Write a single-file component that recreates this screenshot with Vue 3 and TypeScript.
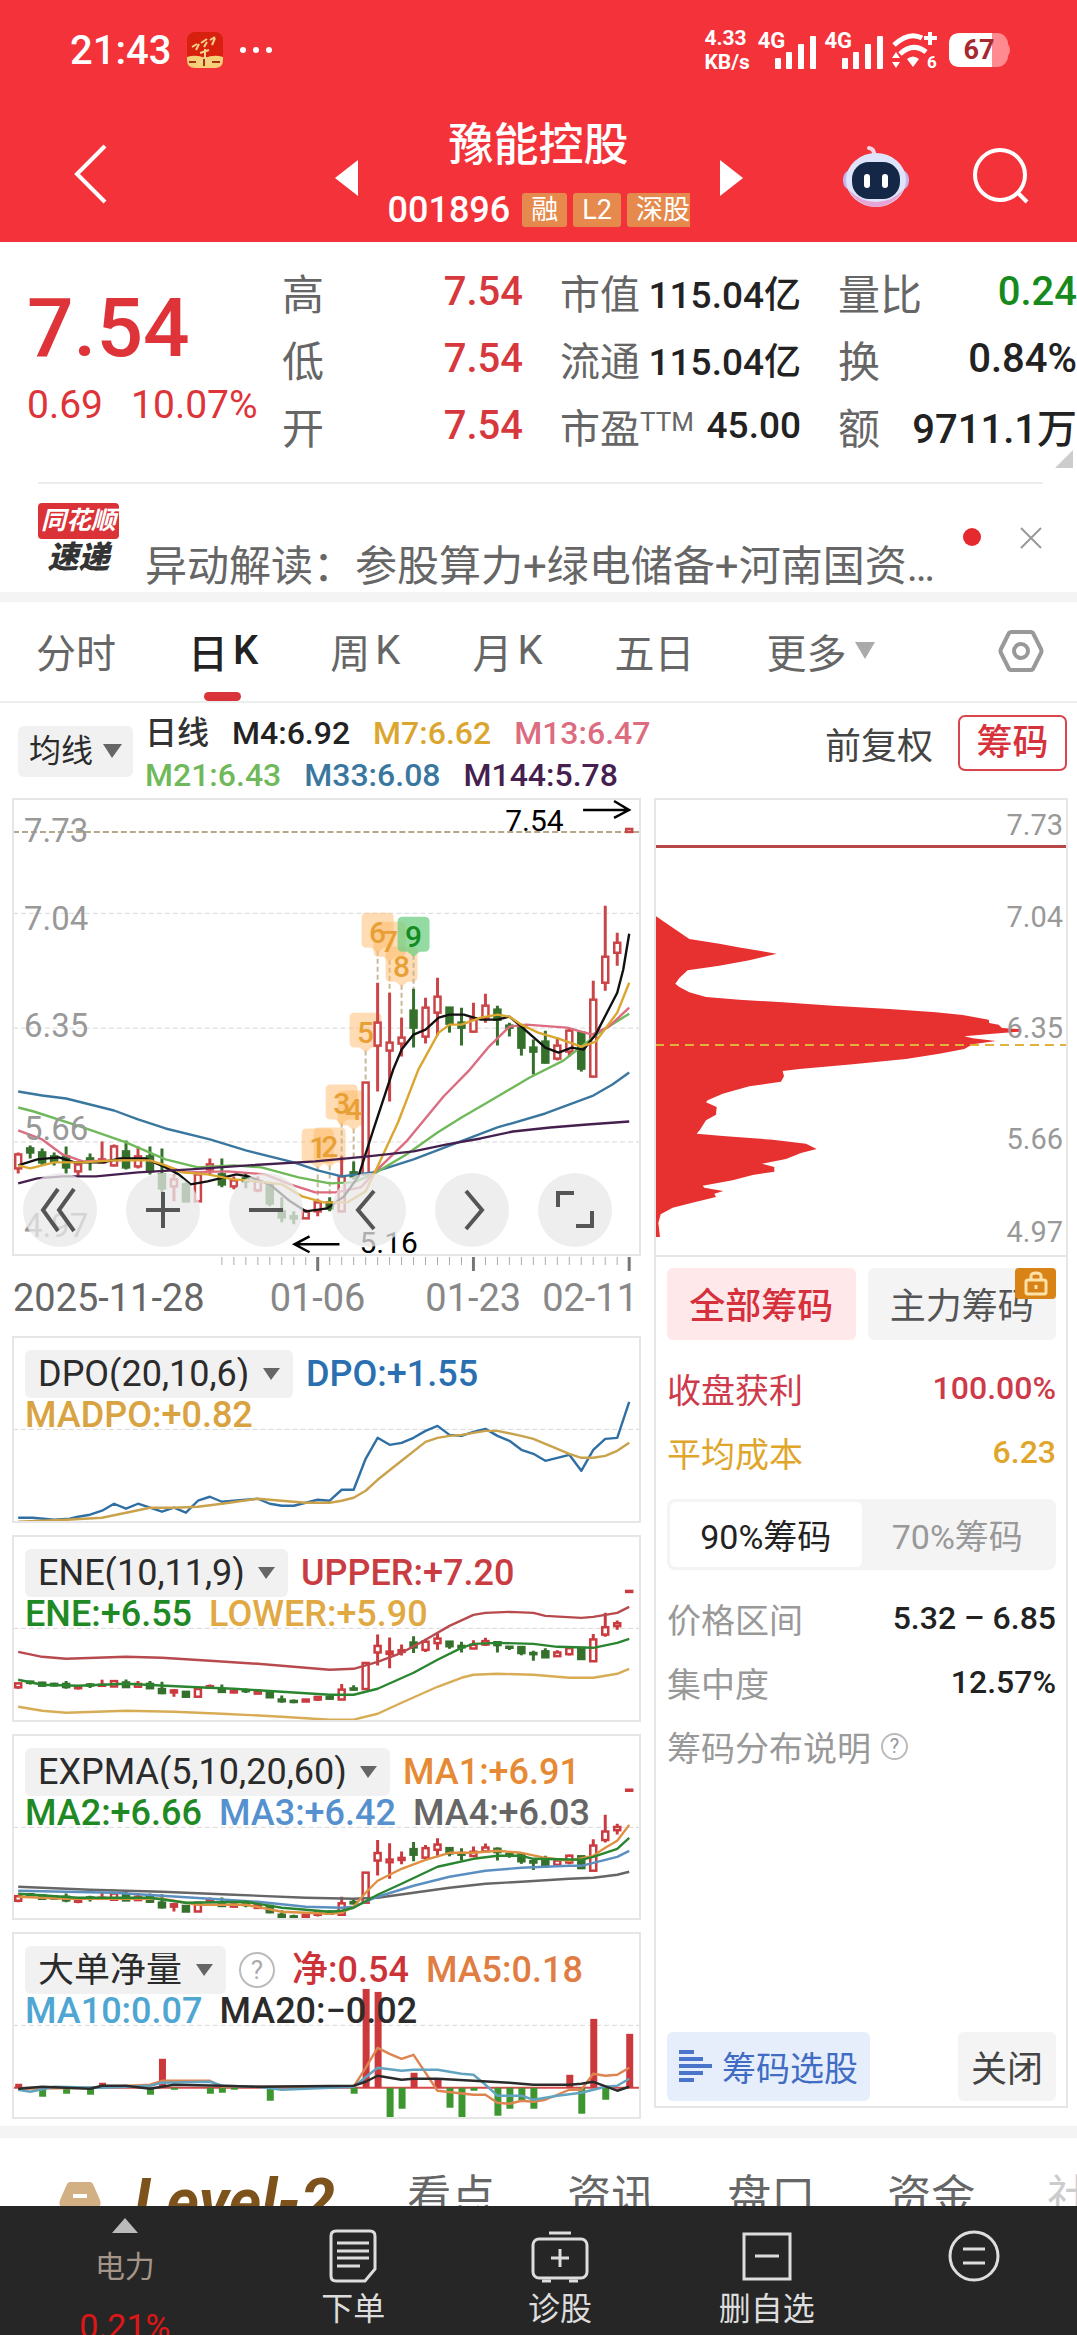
<script setup lang="ts">
type Point = [number, number]
type Candle = [number, number, number, number, 0 | 1]
interface Series { color: string; points: Point[] }
interface Reading { text: string; color: string }

const xAt = (i: number): number => Math.round(52 + i * 120) / 10
const line = (pts: Point[]): string => pts.map(([i, y]) => `${xAt(i)},${y}`).join(' ')

// high, body top, body bottom, low, rising
const candles: Candle[] = [
  [354, 356, 370, 375, 1], [347, 350, 354, 360, 0], [350, 354, 364, 367, 0], [354, 358, 363, 367, 0],
  [348, 358, 369, 375, 0], [364, 366, 373, 378, 1], [355, 360, 363, 372, 0], [343, 361, 364, 364, 1],
  [346, 348, 367, 368, 1], [342, 353, 369, 371, 0], [348, 358, 368, 370, 1], [348, 358, 373, 376, 0],
  [350, 376, 390, 394, 0], [376, 381, 388, 403, 1], [384, 386, 403, 403, 0], [374, 376, 403, 403, 1],
  [360, 366, 371, 376, 1], [360, 376, 386, 389, 0], [378, 382, 388, 391, 1], [374, 380, 383, 390, 0],
  [378, 383, 392, 394, 1], [385, 386, 405, 408, 0], [399, 413, 419, 424, 0], [413, 418, 420, 426, 0],
  [411, 413, 420, 420, 1], [401, 404, 413, 418, 1], [399, 404, 410, 413, 0], [358, 378, 413, 414, 1],
  [363, 374, 378, 381, 0], [284, 284, 376, 376, 1], [184, 224, 247, 293, 1], [194, 244, 252, 303, 1],
  [219, 239, 245, 258, 1], [190, 212, 229, 249, 0], [199, 209, 238, 245, 1], [179, 198, 214, 237, 1],
  [209, 209, 225, 234, 0], [209, 224, 229, 247, 0], [204, 220, 233, 234, 1], [195, 207, 219, 224, 1],
  [207, 211, 221, 247, 0], [224, 227, 229, 238, 0], [228, 228, 249, 257, 0], [241, 249, 253, 276, 0],
  [232, 243, 264, 265, 0], [239, 247, 260, 262, 1], [229, 232, 253, 258, 1], [234, 234, 270, 273, 0],
  [182, 201, 278, 279, 1], [107, 158, 184, 192, 1], [134, 144, 154, 167, 1], [30, 30, 33, 33, 1],
]

const scaled = (offset: number, k: number): Candle[] =>
  candles.map(([h, t, b, l, up]) => [offset + h * k, offset + t * k, offset + b * k, offset + l * k, up])

const averages: Series[] = [
  { color: '#3a779f', points: [[0, 293], [2, 297], [4, 300], [8, 312], [10, 321], [12.3, 330], [16, 341], [19, 352], [23, 364], [25, 372], [27, 378], [29.6, 374], [33, 361], [36.5, 345], [40, 329], [44, 315], [48, 297], [49.6, 286], [51, 274]] },
  { color: '#6fb95a', points: [[0, 309], [1.3, 313], [5.4, 329], [9, 344], [12.3, 361], [15, 369], [18, 367], [20.3, 369], [23.4, 379], [26, 385], [28, 384], [29.6, 376], [32.4, 356], [35, 334], [37, 319], [39.3, 303], [42.7, 279], [45.5, 262], [47, 248], [48.6, 233], [51, 215]] },
  { color: '#dc6c80', points: [[0, 332], [2, 341], [3.7, 356], [5.4, 363], [10.6, 361], [12.3, 368], [14, 374], [17.5, 373], [20.6, 376], [22.7, 386], [24.8, 394], [26.5, 394], [28.6, 389], [30, 371], [32.4, 343], [35.5, 298], [37.7, 271], [39.3, 248], [41, 228], [42.4, 226], [45.8, 229], [47.9, 236], [49.3, 228], [51, 209]] },
  { color: '#111', points: [[0, 367], [1.6, 361], [3.4, 359], [4.7, 364], [7.1, 364], [8.5, 360], [10.6, 360], [12.3, 369], [13.4, 376], [14.4, 386], [15.8, 383], [18.2, 376], [19.2, 378], [21, 386], [22.7, 403], [24, 413], [25.8, 410], [27.2, 398], [28.4, 378], [29.6, 333], [31.3, 271], [32, 251], [33, 236], [34, 231], [35.1, 219], [36, 216], [37.2, 216], [38.6, 221], [40, 221], [41, 218], [42, 228], [44, 249], [45.1, 254], [46.2, 249], [47.2, 251], [48.2, 236], [50, 194], [50.5, 171], [51, 135]] },
  { color: '#dba630', points: [[0, 367], [1, 370], [3, 364], [5.4, 364], [8, 362], [11, 362], [12.3, 367], [13.7, 374], [15.8, 376], [18, 381], [20, 383], [22, 386], [23.7, 398], [25.5, 404], [27.5, 404], [29, 393], [30, 368], [31.7, 324], [33.4, 271], [35.1, 234], [36, 226], [37, 226], [38.6, 219], [40, 216], [41, 218], [42, 226], [43.4, 234], [45.1, 240], [47, 248], [48.2, 243], [50, 214], [51, 184]] },
  { color: '#45204f', points: [[0, 385], [1.6, 380], [3.7, 378], [6.5, 378], [10, 374], [14.4, 371], [19.2, 367], [24.8, 363], [29.2, 358], [33, 353], [35.8, 346], [38.6, 340], [41.3, 333], [44.4, 329], [47.5, 326], [51, 323]] },
]

// day count marks: candle index, digit, centre height
const marks: [number, string, number][] = [
  [25, '1', 350], [26, '2', 349], [27, '3', 306], [28, '4', 312], [29, '5', 234],
  [30, '6', 134], [31, '7', 143], [32, '8', 168], [33, '9', 138],
]

const priceScale: [string, number][] = [['7.73', 31], ['7.04', 119], ['6.35', 226], ['5.66', 330], ['4.97', 427]]
const chipScale: [string, number][] = [['7.73', 25], ['7.04', 117], ['6.35', 228], ['5.66', 339], ['4.97', 432]]
const ticks: number[] = Array.from({ length: 35 }, (_, n) => n + 17)

const maLegend: Reading[][] = [
  [{ text: '日线', color: '#333' }, { text: 'M4:6.92', color: '#222' }, { text: 'M7:6.62', color: '#dba630' }, { text: 'M13:6.47', color: '#dc6c80' }],
  [{ text: 'M21:6.43', color: '#6fb95a' }, { text: 'M33:6.08', color: '#3a779f' }, { text: 'M144:5.78', color: '#45204f' }],
]

interface Panel {
  name: string
  help?: boolean
  first: Reading[]
  second: Reading[]
  candles?: Candle[]
  bars?: Point[]
  series: Series[]
}

const panels: Panel[] = [
  {
    name: 'DPO(20,10,6)',
    first: [{ text: 'DPO:+1.55', color: '#2a6fb0' }],
    second: [{ text: 'MADPO:+0.82', color: '#d8a340' }],
    series: [
      { color: '#2f6fa3', points: [[0, 181], [1.2, 181], [3, 183], [4.3, 182], [5, 180], [6, 178], [7, 174], [8, 167], [9, 172], [10, 167], [11, 171], [12, 175], [13, 171], [14, 176], [15, 164], [16, 160], [17, 165], [19, 163], [20, 162], [21, 167], [22, 169], [23, 169], [24, 166], [25, 163], [26, 164], [27, 153], [28, 153], [29, 122], [30, 101], [31, 108], [32, 106], [33, 101], [34, 94], [35, 89], [36, 98], [37, 99], [38, 95], [39, 92], [40, 99], [41, 104], [42, 113], [43, 117], [44, 124], [45, 121], [46, 118], [47, 134], [48, 113], [49, 102], [50, 101], [51, 65]] },
      { color: '#c9a24b', points: [[0, 185], [2, 184], [4, 183], [7, 181], [9, 176], [11, 171], [13, 171], [15, 170], [17, 167], [20, 162], [22, 164], [24, 166], [26, 166], [27, 164], [28, 161], [29, 154], [30, 143], [32, 124], [34, 105], [35, 101], [36, 99], [37, 98], [38, 96], [39, 94], [40, 94], [42, 99], [43, 102], [45, 112], [46, 117], [47, 121], [48, 121], [49, 119], [50, 114], [51, 106]] },
    ],
  },
  {
    name: 'ENE(10,11,9)',
    first: [{ text: 'UPPER:+7.20', color: '#c93c42' }],
    second: [{ text: 'ENE:+6.55', color: '#1f8a24' }, { text: 'LOWER:+5.90', color: '#e0a944' }],
    candles: scaled(46.5, 0.284),
    series: [
      { color: '#b84a4e', points: [[0, 116], [2, 121], [4, 123], [9, 121], [12, 122], [16, 125], [20, 128], [26, 134], [28, 133], [30, 126], [32, 117], [34, 104], [36, 90], [38, 79], [39, 77], [41, 76], [43, 77], [44, 80], [47, 82], [48, 81], [50, 77], [51, 71]] },
      { color: '#2a8530', points: [[0, 144], [2, 149], [5, 150], [9, 148], [14, 151], [18, 153], [22, 156], [26, 159], [28, 159], [30, 153], [33, 137], [35, 124], [37, 112], [38, 108], [40, 107], [43, 108], [45, 111], [48, 112], [50, 107], [51, 103]] },
      { color: '#d8ac55', points: [[0, 171], [2, 175], [4, 177], [9, 175], [13, 176], [17, 178], [22, 181], [26, 184], [28, 184], [30, 178], [32, 167], [35, 151], [37, 142], [38, 139], [40, 138], [43, 139], [46, 142], [48, 142], [50, 138], [51, 133]] },
    ],
  },
  {
    name: 'EXPMA(5,10,20,60)',
    first: [{ text: 'MA1:+6.91', color: '#e68a35' }],
    second: [{ text: 'MA2:+6.66', color: '#1f8a24' }, { text: 'MA3:+6.42', color: '#5590cf' }, { text: 'MA4:+6.03', color: '#666' }],
    candles: scaled(45, 0.327),
    series: [
      { color: '#666', points: [[0, 152], [6, 155], [12, 157], [18, 160], [24, 163], [28, 164], [30, 163], [33, 158], [36, 153], [39, 149], [42, 147], [46, 144], [48, 143], [50, 140], [51, 137]] },
      { color: '#5b8fc0', points: [[0, 156], [8, 158], [12, 161], [16, 164], [20, 167], [24, 172], [27, 173], [28, 172], [30, 162], [33, 151], [36, 142], [39, 136], [42, 133], [46, 131], [47, 131], [48, 128], [50, 122], [51, 116]] },
      { color: '#df8f42', points: [[0, 162], [4, 164], [8, 164], [12, 164], [15, 170], [19, 170], [22, 177], [26, 179], [27, 178], [28, 172], [29, 158], [30, 146], [32, 134], [34, 125], [36, 118], [38, 118], [40, 116], [42, 118], [44, 123], [46, 126], [48, 121], [49, 113], [50, 106], [51, 90]] },
      { color: '#2a8530', points: [[0, 159], [5, 163], [11, 163], [14, 168], [19, 167], [22, 173], [26, 177], [27, 176], [28, 173], [30, 160], [32, 149], [35, 132], [38, 124], [40, 121], [42, 121], [43, 124], [47, 125], [48, 122], [50, 114], [51, 103]] },
    ],
  },
  {
    name: '大单净量',
    help: true,
    first: [{ text: '净:0.54', color: '#cc3338' }, { text: 'MA5:0.18', color: '#df7d42' }],
    second: [{ text: 'MA10:0.07', color: '#4fa6d2' }, { text: 'MA20:−0.02', color: '#2b2b2b' }],
    bars: [[0, 151], [2, 164], [4, 161], [6, 162], [7, 150], [11, 162], [12, 126], [13, 157], [16, 161], [17, 160], [18, 157], [21, 168], [28, 161], [29, 56], [30, 59], [31, 185], [32, 176], [33, 140], [35, 146], [36, 175], [37, 185], [38, 158], [40, 183], [41, 176], [42, 168], [43, 176], [46, 142], [47, 181], [48, 86], [49, 167], [51, 101]],
    series: [
      { color: '#dd8450', points: [[0, 156], [6, 155], [11, 152], [12, 148], [16, 148], [17, 154], [28, 154], [29, 135], [30, 115], [31, 121], [32, 126], [33, 122], [35, 158], [38, 162], [39, 162], [40, 170], [41, 171], [42, 168], [43, 169], [44, 167], [46, 157], [47, 157], [48, 141], [49, 143], [50, 142], [51, 135]] },
      { color: '#62a3c0', points: [[0, 157], [1, 159], [3, 154], [7, 155], [11, 153], [12, 150], [16, 149], [17, 153], [20, 154], [22, 157], [28, 154], [30, 135], [32, 138], [33, 137], [35, 137], [37, 141], [38, 142], [39, 152], [40, 163], [42, 163], [43, 167], [45, 163], [47, 160], [49, 154], [50, 153], [51, 146]] },
      { color: '#2b2b2b', points: [[0, 156], [2, 154], [6, 156], [7, 153], [9, 153], [11, 156], [13, 152], [17, 153], [20, 154], [28, 153], [29, 149], [30, 143], [32, 147], [33, 146], [35, 146], [38, 148], [41, 150], [43, 152], [46, 152], [47, 151], [48, 149], [50, 158], [51, 154]] },
    ],
  },
]

const quoteRows: string[][][] = [
  [['高', '7.54'], ['低', '7.54'], ['开', '7.54']],
  [['市值', '115.04亿'], ['流通', '115.04亿'], ['市盈', '45.00', 'TTM']],
  [['量比', '0.24'], ['换', '0.84%'], ['额', '9711.1万']],
]
const periods: string[][] = [['分时'], ['日', 'K'], ['周', 'K'], ['月', 'K'], ['五日']]
const controls: [string, string][] = [
  ['最早', 'M35 16 L20 37 L35 58 M51 16 L36 37 L51 58'],
  ['放大', 'M37 19 V55 M20 37 H54'],
  ['缩小', 'M20 37 H54'],
  ['向左', 'M42 18 L26 37 L42 56'],
  ['向右', 'M31 18 L47 37 L31 56'],
  ['全屏', 'M20 34 V20 H36 M38 53 H54 V38'],
]
const infoTabs = ['看点', '资讯', '盘口', '资金', '社区']
</script>

<template>
  <div class="screen">
    <header class="top">
      <div class="status">
        <div class="status-left">
          <span class="clock">21:43</span>
          <svg width="36" height="36" viewBox="0 0 36 36" aria-hidden="true">
            <rect width="36" height="36" rx="8" fill="#d8200f" />
            <path d="M0 25 Q9 22 18 26 Q27 22 36 25 V28 Q36 36 28 36 H8 Q0 36 0 28Z" fill="#f5cf78" />
            <path d="M5 15 l5-3 M9 18 l3-6 M14 11 l6-4 M17 15 l3-5 M23 8 l5-3 M25 13 l3-7 M13 21 l9-3 M18 17 v14 M12 33 l6-8 6 8" stroke="#f3d28a" stroke-width="2" fill="none" />
            <path d="M2 30 h7 M25 30 h8 M17 27 v7" stroke="#a23417" stroke-width="2" />
          </svg>
          <svg width="34" height="8" viewBox="0 0 34 8" fill="#fff" aria-hidden="true"><circle cx="4" cy="4" r="3" /><circle cx="17" cy="4" r="3" /><circle cx="30" cy="4" r="3" /></svg>
        </div>
        <div class="status-right">
          <span class="speed">4.33<br />KB/s</span>
          <span v-for="n in 2" :key="n" class="cell">
            <span>4G</span>
            <svg width="41" height="33" viewBox="0 0 41 33" fill="#fff" aria-hidden="true"><rect x="0" y="22" width="6" height="11" rx="1" /><rect x="11" y="16" width="6" height="17" rx="1" /><rect x="23" y="8" width="6" height="25" rx="1" /><rect x="35" y="0" width="6" height="33" rx="1" /></svg>
          </span>
          <svg width="46" height="38" viewBox="0 0 46 38" fill="none" stroke="#fff" stroke-width="5" aria-hidden="true">
            <path d="M3 14 Q18 0 31 7" /><path d="M9 23 Q22 11 35 21" /><path d="M16 28 Q22 23 28 28 L22 36Z" fill="#fff" stroke="none" />
            <path d="M33 7 H46 M39 1 V14" stroke-width="4" /><path d="M1 27 L5 21 9 27Z M1 31 L5 37 9 31Z" fill="#fff" stroke="none" />
            <text x="36" y="37" font-size="17" font-weight="700" fill="#fff" stroke="none">6</text>
          </svg>
          <svg class="battery" width="63" height="34" viewBox="0 0 63 34" aria-hidden="true">
            <rect width="59" height="34" rx="11" fill="#ff8a90" /><path d="M59 11 q4 6 0 12Z" fill="#ff8a90" />
            <path d="M11 0 H43 V34 H11 Q0 34 0 23 V11 Q0 0 11 0Z" fill="#fff" />
            <text x="30" y="26" font-size="27" font-weight="700" text-anchor="middle" fill="#a5292f">67</text>
          </svg>
        </div>
      </div>
      <div class="titlebar">
        <button class="back" aria-label="返回"><svg width="34" height="60" viewBox="0 0 34 60" fill="none" stroke="#fff" stroke-width="4"><path d="M31 2 L3 30 L31 58" /></svg></button>
        <div class="stock">
          <button aria-label="上一只"><svg width="23" height="36" viewBox="0 0 23 36"><path d="M23 0 V36 L0 18Z" fill="#fff" /></svg></button>
          <div class="stock-name">
            <h1>豫能控股</h1>
            <div class="code"><span>001896</span><i>融</i><i>L2</i><i>深股通</i></div>
          </div>
          <button aria-label="下一只"><svg width="23" height="36" viewBox="0 0 23 36"><path d="M0 0 V36 L23 18Z" fill="#fff" /></svg></button>
        </div>
        <div class="tools">
          <button aria-label="智能助手">
            <svg width="66" height="64" viewBox="0 0 66 64">
              <path d="M31 12 Q32 5 26 4" stroke="#f6d7e4" stroke-width="4" fill="none" stroke-linecap="round" />
              <rect x="0" y="25" width="66" height="22" rx="10" fill="#c5b5ee" /><ellipse cx="33" cy="36" rx="30" ry="27" fill="#dfe4fb" /><path d="M5 45 Q15 62 33 63 Q51 62 61 45 Q49 58 33 58 Q17 58 5 45Z" fill="#e6a5d4" />
              <rect x="9" y="18" width="48" height="37" rx="17" fill="#142747" /><rect x="21" y="30" width="6" height="14" rx="3" fill="#fff" /><rect x="39" y="30" width="6" height="14" rx="3" fill="#fff" />
            </svg>
          </button>
          <button aria-label="搜索"><svg width="56" height="56" viewBox="0 0 56 56" fill="none" stroke="#fff" stroke-width="4"><circle cx="27" cy="27" r="25" /><path d="M44 44 L54 54" /></svg></button>
        </div>
      </div>
    </header>

    <section class="quote">
      <div class="price"><strong>7.54</strong><p><span>0.69</span><span>10.07%</span></p></div>
      <dl v-for="(col, c) in quoteRows" :key="c" :class="'col' + c">
        <div v-for="row in col" :key="row[0]"><dt>{{ row[0] }}<sup v-if="row[2]">{{ row[2] }}</sup></dt><dd :class="{ fall: row[1] === '0.24' }">{{ row[1] }}</dd></div>
      </dl>
      <svg class="corner" width="18" height="18" viewBox="0 0 18 18" aria-hidden="true"><path d="M18 0 V18 H0Z" fill="#ccc" /></svg>
    </section>

    <section class="news">
      <div class="brand"><b>同花顺</b><em>速递</em></div>
      <a href="#news">异动解读：参股算力+绿电储备+河南国资…</a>
      <span class="dot"></span>
      <button aria-label="关闭消息"><svg width="24" height="24" viewBox="0 0 24 24" stroke="#999" stroke-width="2"><path d="M2 2 L22 22 M22 2 L2 22" /></svg></button>
    </section>

    <nav class="periods">
      <button v-for="p in periods" :key="p[0]" :class="{ on: p[0] === '日' }"><span v-for="part in p" :key="part">{{ part }}</span></button>
      <button class="more">更多<svg width="20" height="17" viewBox="0 0 20 17"><path d="M0 0 H20 L10 17Z" fill="#aaa" /></svg></button>
      <button class="gear" aria-label="设置"><svg width="46" height="44" viewBox="0 0 46 44" fill="none" stroke="#999" stroke-width="4"><path d="M13 3 H33 Q34 3 35 4 L43 20 Q44 22 43 24 L35 40 Q34 41 33 41 H13 Q12 41 11 40 L3 24 Q2 22 3 20 L11 4 Q12 3 13 3Z" /><circle cx="23" cy="22" r="7" /></svg></button>
    </nav>

    <section class="legend">
      <span class="picker small"><select aria-label="主图指标"><option>均线</option></select><svg width="19" height="14" viewBox="0 0 19 14"><path d="M0 0 H19 L9 14Z" fill="#666" /></svg></span>
      <div class="ma">
        <p v-for="(row, r) in maLegend" :key="r"><span v-for="m in row" :key="m.text" :style="{ color: m.color }">{{ m.text }}</span></p>
      </div>
      <div class="modes">
        <button class="adjust">前复权</button>
        <button class="chips">筹码</button>
      </div>
    </section>

    <main class="board">
      <div class="charts">
        <div class="kline">
          <svg viewBox="0 0 628 457" role="img" aria-label="日K线">
            <g stroke="#d8d8d8" stroke-dasharray="5 3"><path d="M0 114.5 H628 M0 229.5 H628 M0 343.5 H628" /></g>
            <path d="M0 33 H628" stroke="#b3a98a" stroke-width="2" stroke-dasharray="6 3" />
            <g v-for="([i, d, y]) in marks" :key="d">
              <path :d="`M${xAt(i)} ${y + 18} V${candles[i][0]}`" stroke="#c9b99a" stroke-width="2" stroke-dasharray="5 3" />
              <path :d="`M${xAt(i) - 11} ${y - 20} h22 q5 0 5 5 v25 q0 5 -5 5 h-5 l-6 5 -6 -5 h-5 q-5 0 -5 -5 v-25 q0 -5 5 -5Z`" :fill="d === '9' ? '#6fcf83' : '#ffb968'" :fill-opacity="d === '9' ? 0.75 : 0.5" />
            </g>
            <g v-for="(k, i) in candles" :key="i" :stroke="k[4] ? '#cb4548' : '#35702c'" stroke-width="3">
              <path :d="`M${xAt(i)} ${k[0]} V${k[1]} M${xAt(i)} ${k[2]} V${k[3]}`" />
              <rect :x="xAt(i) - 3" :y="k[1]" width="6" :height="k[2] - k[1]" :fill="k[4] ? '#fff' : '#35702c'" stroke-width="2.5" />
            </g>
            <polyline v-for="s in averages" :key="s.color" :points="line(s.points)" fill="none" :stroke="s.color" stroke-width="2.4" stroke-linejoin="round" />
            <text v-for="([i, d, y]) in marks" :key="d" class="mark" :x="xAt(i)" :y="y + 10" :fill="d === '9' ? '#158c22' : '#e8a036'">{{ d }}</text>
            <text v-for="([t, y]) in priceScale" :key="t" class="scale" x="11" :y="y + 12">{{ t }}</text>
            <text class="extreme" x="493" y="32">7.54</text>
            <path d="M571 11 H617 M602 2 L617 11 L602 19" fill="none" stroke="#000" stroke-width="2.5" />
            <text class="extreme" x="347" y="455">5.16</text>
            <path d="M327 446 H282 M297 438 L282 446 L297 454" fill="none" stroke="#000" stroke-width="2.5" />
          </svg>
          <div class="controls">
            <button v-for="([n, d]) in controls" :key="n" :aria-label="n"><svg width="74" height="74" viewBox="0 0 74 74" fill="none" stroke="#555" stroke-width="4"><path :d="d" /></svg></button>
          </div>
        </div>
        <svg class="axis" viewBox="0 0 628 82" role="img" aria-label="日期">
          <path v-for="i in ticks" :key="i" :d="`M${xAt(i)} 2 V${(i + 1) % 13 === 0 ? 16 : 10}`" :stroke="(i + 1) % 13 === 0 ? '#777' : '#aaa'" :stroke-width="(i + 1) % 13 === 0 ? 3 : 1" />
          <text x="0" y="56" class="from">2025-11-28</text>
          <text x="305" y="56" text-anchor="middle">01-06</text>
          <text x="461" y="56" text-anchor="middle">01-23</text>
          <text x="626" y="56" text-anchor="end">02-11</text>
        </svg>
        <section v-for="p in panels" :key="p.name" class="panel">
          <svg viewBox="0 0 628 185" role="img" :aria-label="p.name + '图'">
            <path d="M0 92.5 H628" stroke="#d8d8d8" stroke-dasharray="5 3" />
            <template v-if="p.candles">
              <g v-for="(k, i) in p.candles" :key="i" :stroke="k[4] ? '#cb3a3e' : '#35702c'" stroke-width="3">
                <path :d="`M${xAt(i)} ${k[0]} V${k[1]} M${xAt(i)} ${k[2]} V${k[3]}`" />
                <rect :x="xAt(i) - 3" :y="k[1]" width="6" :height="Math.max(k[2] - k[1], 1)" :fill="k[4] ? '#fff' : '#35702c'" stroke-width="2.5" />
              </g>
            </template>
            <template v-if="p.bars">
              <path d="M0 155 H628" stroke="#d44b4b" stroke-width="2" />
              <rect v-for="([i, y]) in p.bars" :key="i" :x="xAt(i) - 3" width="7" :y="Math.min(y, 155)" :height="Math.abs(y - 155)" :fill="y < 155 ? '#cc393c' : '#3d9630'" />
            </template>
            <polyline v-for="s in p.series" :key="s.color" :points="line(s.points)" fill="none" :stroke="s.color" stroke-width="2.4" stroke-linejoin="round" />
          </svg>
          <div class="readings">
            <p>
              <span class="picker"><select :aria-label="p.name + '指标'"><option>{{ p.name }}</option></select><svg width="17" height="12" viewBox="0 0 17 12"><path d="M0 0 H17 L8 12Z" fill="#666" /></svg></span>
              <button v-if="p.help" class="help" aria-label="指标说明">?</button>
              <span v-for="r in p.first" :key="r.text" :style="{ color: r.color }">{{ r.text }}</span>
            </p>
            <p><span v-for="r in p.second" :key="r.text" :style="{ color: r.color }">{{ r.text }}</span></p>
          </div>
        </section>
      </div>

      <aside class="chipbox">
        <svg viewBox="0 0 412 456" role="img" aria-label="筹码分布">
          <path transform="scale(.33333) translate(-47 -28)" fill="#e73030" d="M47 340 H50 V380 L150 448 240 462 305 474 412 492 330 512 240 528 145 542 120 565 108 582 120 592 150 608 200 622 300 630 430 638 580 648 750 658 890 668 970 676 1048 690 1050 700 1078 705 1088 715 1142 718 1142 726 1060 732 975 740 1000 746 1070 754 1000 764 975 778 900 792 800 808 640 824 480 838 430 844 434 860 425 876 330 890 250 912 205 932 200 938 232 952 230 975 200 992 182 1020 172 1032 260 1040 400 1050 500 1062 532 1078 485 1090 440 1108 368 1122 405 1132 405 1146 340 1156 280 1172 190 1188 195 1194 252 1204 225 1212 230 1222 165 1238 100 1254 64 1274 57 1300 62 1342 H47Z" />
          <path d="M0 47.5 H412" stroke="#b8474a" stroke-width="3" />
          <path d="M0 246 H412" stroke="#dfb23c" stroke-width="2" stroke-dasharray="9 6" />
          <text v-for="([t, y]) in chipScale" :key="t" x="408" :y="y + 11" text-anchor="end">{{ t }}</text>
        </svg>
        <div class="chip-info">
          <div class="kinds">
            <button class="on">全部筹码</button>
            <button>主力筹码<span class="lock"><svg width="24" height="25" viewBox="0 0 24 25" fill="none" stroke="#ffe2a8" stroke-width="3"><rect x="2" y="9" width="20" height="14" rx="2" /><path d="M7 9 V5 Q7 2 12 2 Q17 2 17 5 V9 M12 14 V18" /></svg></span></button>
          </div>
          <p class="row gain"><span>收盘获利</span><b>100.00%</b></p>
          <p class="row cost"><span>平均成本</span><b>6.23</b></p>
          <div class="segment"><button class="on">90%筹码</button><button>70%筹码</button></div>
          <p class="row"><span>价格区间</span><b>5.32 – 6.85</b></p>
          <p class="row"><span>集中度</span><b>12.57%</b></p>
          <p class="row note"><span>筹码分布说明</span><button class="help tiny" aria-label="筹码分布说明">?</button></p>
          <div class="actions">
            <button class="pick"><svg width="34" height="33" viewBox="0 0 34 33" stroke="#4a74c9" stroke-width="4"><path d="M0 2 H15 M0 9 H24 M0 16 H33 M0 23 H24 M0 30 H15" /></svg>筹码选股</button>
            <button class="close">关闭</button>
          </div>
        </div>
      </aside>
    </main>

    <nav class="info">
      <a href="#level2" class="level"><svg width="42" height="46" viewBox="0 0 42 46"><path d="M11 2 H31 Q33 2 34 4 L41 20 Q42 23 41 26 L34 42 Q33 44 31 44 H11 Q9 44 8 42 L1 26 Q0 23 1 20 L8 4 Q9 2 11 2Z" fill="#d3b083" /><path d="M14 16 H28" stroke="#fff" stroke-width="4" /></svg><span>Level-2</span></a>
      <a v-for="t in infoTabs" :key="t" :href="'#' + t">{{ t }}</a>
    </nav>

    <footer class="dock">
      <a href="#sector" class="sector"><svg width="26" height="15" viewBox="0 0 26 15"><path d="M13 0 L26 15 H0Z" fill="#bbb" /></svg><span>电力</span><b>0.21%</b></a>
      <button><svg width="50" height="54" viewBox="0 0 50 54" fill="none" stroke="#ddd" stroke-width="3"><path d="M8 2 H42 Q47 2 47 7 V40 L37 52 H8 Q3 52 3 47 V7 Q3 2 8 2Z M9 14 H41 M9 22 H41 M9 29 H41 M9 37 H32" /></svg>下单</button>
      <button><svg width="58" height="54" viewBox="0 0 58 54" fill="none" stroke="#ddd" stroke-width="3"><rect x="2" y="10" width="54" height="39" rx="6" /><path d="M18 4 H40 M29 20 V38 M20 29 H38 M11 52 H20 M38 52 H47" /></svg>诊股</button>
      <button><svg width="50" height="54" viewBox="0 0 50 54" fill="none" stroke="#ddd" stroke-width="3"><rect x="2" y="5" width="46" height="45" /><path d="M13 27 H37" /></svg>删自选</button>
      <button aria-label="更多功能"><svg width="54" height="54" viewBox="0 0 54 54" fill="none" stroke="#ddd" stroke-width="3"><circle cx="27" cy="27" r="24" /><path d="M16 20 H38 M16 34 H38" /></svg></button>
    </footer>
  </div>
</template>

<style>
body { background: #fff; }
</style>

<style scoped>
.screen { display: flex; flex-direction: column; height: 100vh; overflow: hidden; font-family: Roboto, "Noto Sans CJK SC", sans-serif; color: #333; }
.screen * { box-sizing: border-box; }
.screen > * { flex: none; }
button, select { font: inherit; color: inherit; border: 0; padding: 0; margin: 0; background: none; }
a { color: inherit; text-decoration: none; }
p, h1, dl, dd { margin: 0; }
svg { display: block; flex: none; }

.top { background: #f3323a; color: #fff; }
.status { display: flex; justify-content: space-between; align-items: center; height: 100px; padding: 0 65px 0 70px; }
.status-left { display: flex; align-items: center; gap: 16px; }
.clock { font-size: 40px; font-weight: 500; }
.status-right { display: flex; align-items: center; gap: 8px; font-weight: 700; }
.speed { font-size: 21px; line-height: 24px; }
.cell { display: flex; align-items: flex-start; font-size: 22px; line-height: 18px; }
.cell svg { margin: 4px 0 0 -10px; }
.battery { margin-left: 4px; }
.titlebar { display: grid; grid-template-columns: 1fr auto 1fr; align-items: center; height: 142px; padding-top: 14px; }
.back { justify-self: start; margin: 0 0 8px 74px; }
.stock { display: flex; align-items: center; justify-content: space-between; width: 408px; }
.stock-name { width: 302px; overflow: hidden; }
h1 { font-size: 45px; font-weight: 500; line-height: 64px; text-align: center; }
.code { display: flex; align-items: center; gap: 6px; height: 64px; font-size: 36px; font-weight: 500; }
.code span { margin-right: 6px; }
.code i { flex: none; padding: 0 9px; font-size: 27px; font-style: normal; font-weight: 400; line-height: 34px; border-radius: 3px; background: #e58a4c; }
.tools { display: flex; align-items: center; justify-content: flex-end; gap: 64px; padding: 0 48px 4px 0; }

.quote { position: relative; display: grid; grid-template-columns: minmax(0, 218fr) minmax(0, 241fr) minmax(0, 241fr) minmax(0, 239fr); column-gap: 37px; padding: 16px 0 23px 27px; white-space: nowrap; }
.price { padding-top: 20px; color: #de3338; }
.price strong { display: block; font-size: 82px; font-weight: 500; line-height: 100px; }
.price p { display: flex; gap: 28px; font-size: 39px; line-height: 54px; }
.quote dl div { display: flex; align-items: center; justify-content: space-between; height: 67px; }
dt { font-size: 42px; color: #666; }
dt sup { font-size: 26px; line-height: 1; vertical-align: 12px; }
dd { font-size: 40px; font-weight: 500; color: #222; }
.col0 dd { color: #d6383d; }
.col1 dt { font-size: 40px; }
.col1 dd { font-size: 37px; }
dd.fall { color: #168a1c; }
.corner { position: absolute; right: 4px; bottom: 14px; }

.news { display: flex; height: 110px; margin: 0 34px 0 38px; border-top: 2px solid #ececec; }
.brand { width: 81px; padding-top: 19px; font-style: italic; text-align: center; }
.brand b { display: block; font-size: 25px; line-height: 36px; color: #fff; background: #db3238; border-radius: 4px; }
.brand em { display: block; font-size: 31px; font-weight: 900; line-height: 38px; }
.news a { margin-left: 26px; padding-top: 55px; font-size: 42px; line-height: 55px; color: #666; white-space: nowrap; }
.dot { width: 18px; height: 18px; margin: 44px 0 0 auto; border-radius: 50%; background: #e4292f; }
.news button { align-self: flex-start; margin: 42px 0 0 38px; }

.periods { display: flex; align-items: center; gap: 72px; height: 111px; padding: 0 33px 2px 36px; border-top: 10px solid #f4f4f4; border-bottom: 2px solid #eee; font-size: 40px; color: #666; }
.periods button { display: flex; align-items: center; gap: 5px; height: 100%; position: relative; white-space: nowrap; }
.periods .on { color: #222; font-weight: 500; }
.periods .on::after { content: ""; position: absolute; left: 50%; bottom: -2px; width: 37px; height: 9px; margin-left: -19px; border-radius: 5px; background: #d9343a; }
.periods .more { gap: 8px; }
.periods .gear { margin-left: auto; }

.legend { display: flex; align-items: center; height: 96px; padding: 0 10px 0 18px; white-space: nowrap; }
.picker { display: inline-flex; align-items: center; gap: 13px; height: 48px; padding: 0 13px; border-radius: 6px; background: #f1f1f1; color: #2b2b2b; }
.picker select { appearance: none; outline: none; }
.picker.small { gap: 9px; height: 51px; padding: 0 11px; font-size: 32px; }
.ma { margin-left: 12px; padding-top: 6px; font-size: 32px; font-weight: 500; line-height: 42px; }
.ma p { display: flex; gap: 23px; }
.modes { display: flex; align-items: center; gap: 25px; margin-left: auto; padding-bottom: 16px; font-size: 36px; }
.adjust { color: #444; }
.chips { width: 109px; height: 56px; border: 2px solid #d9444d; border-radius: 7px; color: #d6323c; font-weight: 500; line-height: 50px; }

.board { display: flex; align-items: stretch; gap: 15px; padding: 0 10px 8px 13px; }
.charts { flex: 627 1 0; min-width: 0; }
.board svg { max-width: 100%; }
.kline { position: relative; outline: 2px solid #e6e6e6; outline-offset: -1px; }
.kline > svg, .axis, .panel > svg, .chipbox > svg { width: 100%; height: auto; }
.mark { font-size: 30px; font-weight: 500; text-anchor: middle; }
.scale { font-size: 33px; fill: #999; }
.extreme { font-size: 30px; fill: #000; }
.controls { position: absolute; left: 10px; right: 28px; bottom: 8px; display: flex; justify-content: space-between; }
.controls button { border-radius: 50%; background: rgba(232, 232, 232, .75); }
.axis text { font-size: 38px; fill: #888; }
.axis .from { fill: #666; }
.panel { display: grid; outline: 2px solid #e6e6e6; outline-offset: -1px; }
.panel + .panel { margin-top: 14px; }
.panel > svg, .readings { grid-area: 1 / 1; }
.readings { padding: 13px 0 0 12px; font-size: 36px; font-weight: 500; line-height: 34px; white-space: nowrap; }
.readings p { display: flex; align-items: center; gap: 17px; }
.readings .picker { margin-right: -4px; font-weight: 400; }
.help { width: 36px; height: 36px; border: 2px solid #bbb; border-radius: 50%; color: #aaa; font-size: 26px; font-weight: 400; line-height: 32px; }
.help.tiny { width: 27px; height: 27px; margin-left: 10px; font-size: 20px; line-height: 23px; color: #999; }

.chipbox { flex: 412 1 0; min-width: 0; display: flex; flex-direction: column; margin-bottom: 11px; outline: 2px solid #e6e6e6; outline-offset: -1px; }
.chipbox > svg { border-bottom: 2px solid #e6e6e6; }
.chipbox text { font-size: 29px; fill: #999; }
.chip-info { flex: 1; display: flex; flex-direction: column; padding: 11px 11px 6px 12px; font-size: 34px; }
.kinds { display: grid; grid-template-columns: 1fr 1fr; gap: 12px; margin-bottom: 16px; }
.kinds button { position: relative; height: 72px; padding-bottom: 3px; border-radius: 6px; background: #f4f4f4; color: #555; font-size: 36px; }
.kinds .on { background: #fee8ea; color: #d5303c; font-weight: 500; }
.lock { position: absolute; top: 0; right: 0; display: grid; place-items: center; width: 41px; height: 31px; border-radius: 4px; background: #d98316; }
.row { display: flex; align-items: center; justify-content: space-between; height: 64px; color: #999; }
.row b { font-size: 32px; font-weight: 500; color: #222; }
.row.gain, .row.gain b { color: #ce3a4a; }
.row.cost, .row.cost b { color: #e0a62c; }
.row.note { justify-content: flex-start; }
.segment { display: grid; grid-template-columns: 1fr 1fr; height: 71px; margin: 15px 0 16px; padding: 3px; border-radius: 8px; background: #f4f4f4; color: #999; }
.segment .on { border-radius: 6px; background: #fff; color: #222; }
.actions { display: flex; justify-content: space-between; margin-top: auto; }
.actions button { height: 69px; border-radius: 6px; background: #f4f4f4; color: #444; }
.pick { display: flex; align-items: center; gap: 9px; padding: 0 12px; }
.actions .pick { background: #e7eefb; color: #416cc4; }
.actions .close { width: 98px; font-size: 36px; }

.screen .info { flex: 1 1 0; display: flex; gap: 72px; overflow: hidden; min-height: 0; padding: 27px 0 0 59px; border-top: 12px solid #f4f4f4; font-size: 44px; line-height: 64px; color: #666; white-space: nowrap; }
.level { display: flex; align-items: flex-start; gap: 33px; }
.level svg { margin-top: 15px; }
.level span { font-size: 62px; font-style: italic; font-weight: 700; line-height: 74px; color: #7d521b; }
.info a:last-child { color: #ccc; }

.dock { display: grid; grid-template-columns: 250fr repeat(4, 207fr); height: 129px; overflow: hidden; background: #262626; color: #ddd; font-size: 32px; }
.dock button { display: flex; flex-direction: column; align-items: center; gap: 6px; padding-top: 23px; line-height: 40px; }
.sector { display: flex; flex-direction: column; align-items: center; padding-top: 12px; color: #a3958a; font-size: 30px; }
.sector span { line-height: 68px; }
.sector b { font-size: 34px; font-weight: 400; line-height: 50px; color: #e01616; }
</style>
